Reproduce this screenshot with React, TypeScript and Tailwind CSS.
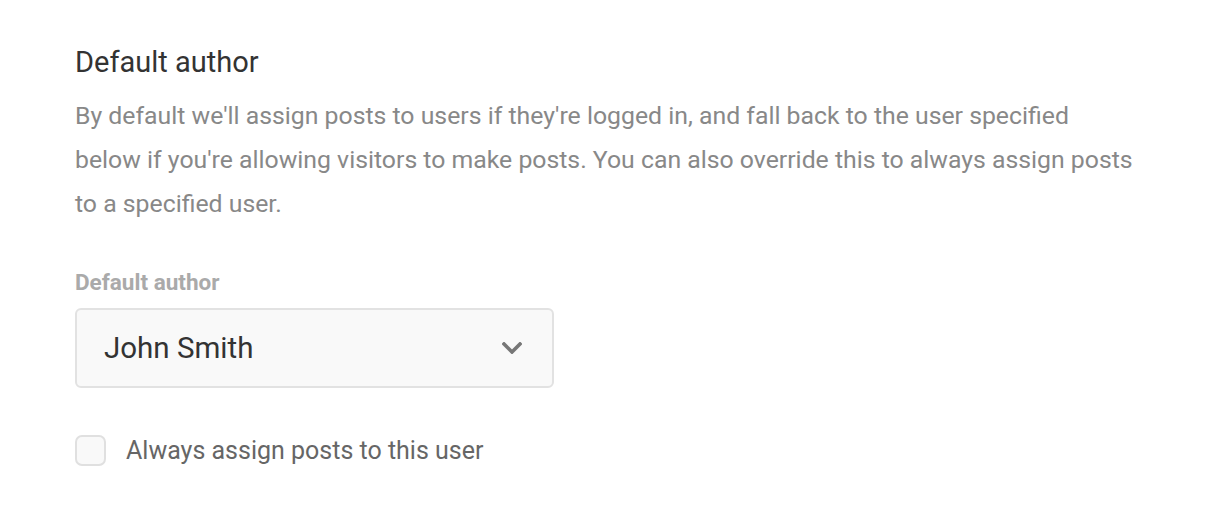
export default function App() {
  return (
    <div className="min-h-screen bg-white font-['Roboto',sans-serif]">
      <div className="w-[1134px] pl-[75px] pt-[44px]">
        <h2 className="text-[29px] leading-[36px] text-[#333333]">Default author</h2>
        <p className="mt-[14px] text-[24.8px] leading-[44px] text-[#888888]">
          By default we'll assign posts to users if they're logged in, and fall back to the user specified below if
          you're allowing visitors to make posts. You can also override this to always assign posts to a specified
          user.
        </p>

        <div className="mt-[44px] text-[22.5px] leading-[24px] font-bold text-[#aaaaaa]">Default author</div>
        <div className="mt-[14px] w-[479px] h-[80px] flex items-center justify-between rounded-md border-2 border-[#e2e2e2] bg-[#f9f9f9] pl-[27px] pr-[30px]">
          <span className="text-[29.5px] text-[#333333]">John Smith</span>
          <svg width="20" height="12" viewBox="0 0 20 12" fill="none" className="text-[#777777]">
            <polyline
              points="2,2 10,10 18,2"
              stroke="currentColor"
              strokeWidth="3.6"
              strokeLinecap="square"
              strokeLinejoin="miter"
            />
          </svg>
        </div>

        <label className="mt-[44px] flex items-center gap-[20px]">
          <span className="w-[31px] h-[31px] rounded-[7px] border-2 border-[#e0e0e0] bg-[#f9f9f9]" />
          <span className="text-[25px] text-[#666666]">Always assign posts to this user</span>
        </label>
      </div>
    </div>
  );
}
